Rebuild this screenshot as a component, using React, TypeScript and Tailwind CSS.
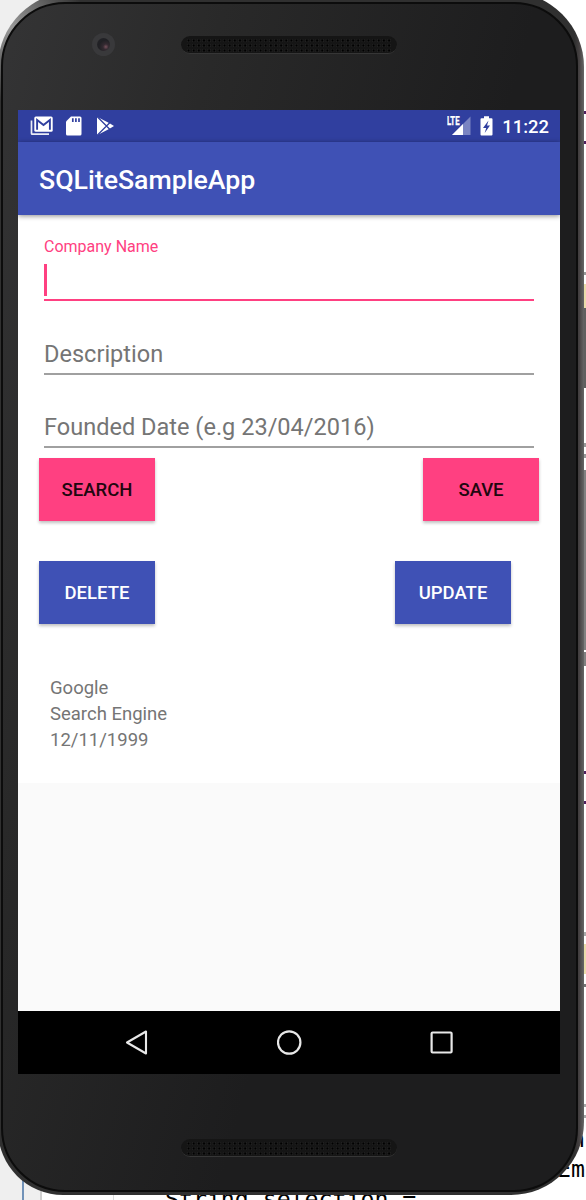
import React from "react";

function Speaker() {
  return (
    <div className="h-[18px] w-[216px] rounded-full border-b border-[#363636] bg-[#151515] px-[5px] pt-[2px]">
      <div className="h-[15px] w-full bg-[radial-gradient(circle_at_50%_50%,#000_0.8px,#242424_1.5px,transparent_2px)] bg-[length:5.15px_5px]" />
    </div>
  );
}

function StatusBar() {
  return (
    <div className="flex h-8 shrink-0 items-center bg-[#303f9f] px-3 text-white">
      <div className="flex items-center gap-3">
        <svg className="h-5 w-6" viewBox="0 0 24 20">
          <path d="M1.500 4.500v13q0 .7.700.7H19" fill="none" stroke="currentColor" strokeWidth="1.700" opacity=".9" />
          <rect x="4.300" y=".500" width="18.400" height="15.200" rx="1.500" fill="currentColor" />
          <path d="M7.100 13.700V4L13.500 9 19.900 4v9.700" fill="none" stroke="#303f9f" strokeWidth="1.900" />
        </svg>
        <svg className="-ml-px h-5 w-[17px]" viewBox="0 0 17 20">
          <path d="M6 .5h9q1.500 0 1.500 1.500v16q0 1.500-1.500 1.500H2.500Q1 19.500 1 18V5.500z" fill="currentColor" />
          <path d="M7.800 2.300v3.800M10.900 2.300v3.800M14 2.300v3.800" stroke="#303f9f" strokeWidth="1.700" />
        </svg>
        <svg className="ml-[2px] h-5 w-[19px]" viewBox="0 0 19 20">
          <path d="M1 .700 13.500 7.300 18 10l-4.500 2.700L1 19.300z" fill="currentColor" />
          <path d="M1 .500 14.500 14M1 19.500 14.500 6" stroke="#303f9f" strokeWidth="1.300" />
        </svg>
      </div>
      <div className="-mr-px ml-auto flex items-center gap-[9px]">
        <svg className="h-5 w-6" viewBox="0 0 24 20">
          <path d="M5 19 23.500 .500V19z" fill="#7a84c2" />
          <path d="M5 19 16 8v11z" fill="currentColor" />
          <path d="M0 0h13v10H0z" fill="#303f9f" />
          <text x="0" y="9" textLength="12.500" lengthAdjust="spacingAndGlyphs" fill="currentColor" stroke="currentColor" strokeWidth=".3" fontFamily="Roboto, sans-serif" fontSize="12" fontWeight="700">LTE</text>
        </svg>
        <svg className="h-5 w-[13px]" viewBox="0 0 13 20">
          <path d="M4 .300h5v2h2.500q1 0 1 1v15.200q0 1-1 1h-10q-1 0-1-1V3.300q0-1 1-1H4z" fill="currentColor" />
          <path d="M8.500 4.500 3 12h3.200l-1.500 5L10 9.500H7z" fill="#303f9f" />
        </svg>
        <span className="mt-[2px] text-[18.400px] font-medium leading-5">11:22</span>
      </div>
    </div>
  );
}

function Field({ label }: { label: string }) {
  return (
    <div className="flex h-[73.500px] items-end border-b-2 border-[#a0a0a0] pb-[5px] text-[23.550px] leading-7 text-[#757575]">
      {label}
    </div>
  );
}

function Button({ label, tone }: { label: string; tone: string }) {
  return (
    <button className={`${tone} flex h-[63px] w-[116px] items-center justify-center pt-[3px] text-[18.500px] font-medium shadow-[0_2px_3px_rgba(0,0,0,0.25)]`}>
      {label}
    </button>
  );
}

function Screen() {
  return (
    <div className="flex h-[964px] w-[542px] flex-col overflow-hidden bg-[#fafafa]">
      <StatusBar />
      <header className="z-10 flex h-[73px] shrink-0 items-center bg-[#3f51b5] pl-[21px] pt-[3px] text-[26.700px] font-medium text-white shadow-[0_1px_5px_rgba(0,0,0,0.45)]">
        SQLiteSampleApp
      </header>
      <main className="flex h-[568px] shrink-0 flex-col bg-white">
        <div className="px-[26px] pt-[22px]">
          <div className="h-16 border-b-2 border-[#ff4081] text-[16px] leading-5 text-[#ff4081]">
            Company Name
            <div className="mt-[7px] h-8 w-[3px] bg-[#ff4081]" />
          </div>
          <Field label="Description" />
          <Field label="Founded Date (e.g 23/04/2016)" />
        </div>
        <div className="mt-[10px] flex justify-between px-[21px]">
          <Button label="SEARCH" tone="bg-[#ff4081] text-[#21070f]" />
          <Button label="SAVE" tone="bg-[#ff4081] text-[#21070f]" />
        </div>
        <div className="mt-10 flex justify-between pl-[21px] pr-[49px]">
          <Button label="DELETE" tone="bg-[#3f51b5] text-white" />
          <Button label="UPDATE" tone="bg-[#3f51b5] text-white" />
        </div>
        <div className="px-8 pt-[52px] text-[18.500px] leading-[25.800px] text-[#757575]">
          <p>Google</p>
          <p>Search Engine</p>
          <p>12/11/1999</p>
        </div>
      </main>
      <nav className="mt-auto flex h-[63px] shrink-0 items-center justify-between bg-black pl-[107px] pr-[106px] text-[#e8e8e8]">
        <svg className="h-[26px] w-6" viewBox="0 0 24 26" fill="none" stroke="currentColor" strokeWidth="2.100" strokeLinejoin="round">
          <path d="M2 12.500 21 1.500v22z" />
        </svg>
        <svg className="h-[26px] w-[26px]" viewBox="0 0 26 26" fill="none" stroke="currentColor" strokeWidth="2.200">
          <circle cx="12.200" cy="12.500" r="11.200" />
        </svg>
        <svg className="h-6 w-6" viewBox="0 0 24 24" fill="none" stroke="currentColor" strokeWidth="2.200">
          <rect x="1.600" y="1.500" width="20" height="20" rx="1" />
        </svg>
      </nav>
    </div>
  );
}

function EditorBackdrop() {
  return (
    <div className="flex h-full w-full flex-col justify-between overflow-hidden">
      <div className="flex h-20">
        <div className="w-[60px] bg-[#efefef]" />
      </div>
      <div className="flex h-[76px] whitespace-pre font-['DejaVu_Sans_Mono',monospace] text-[23.200px] leading-[30px] text-black">
        <div className="w-[22px] bg-[#efefef]" />
        <div className="w-[2px] bg-[#7192b8]" />
        <div className="w-4 bg-[#efefef]" />
        <div className="w-[73px] border-l-2 border-[#d0d0d0]" />
        <div className="w-[52px] border-l border-[#dcdcdc]" />
        <div className="flex grow flex-col">
          <span className="self-end pr-px">n</span>
          <span className="self-end pr-px">Em</span>
          <span>String selection =</span>
        </div>
      </div>
    </div>
  );
}

const gutterMarks = [
  "mt-[111px] h-[3px] bg-[#50205f]",
  "mt-[27px] h-[3px] bg-[#50205f]",
  "mt-32 h-[3px] bg-[#999]",
  "mt-[9px] h-6 bg-[#eadcaa]",
  "h-20 bg-[#606060]",
  "mt-[55px] h-1 bg-[#999]",
  "mt-[7px] h-1 bg-[#999]",
  "mt-3 h-[180px] bg-[#808080]",
  "mt-[2px] h-[14px] bg-[#808080]",
  "mt-[105px] h-[3px] bg-[#50205f]",
  "mt-[27px] h-[3px] bg-[#50205f]",
  "mt-[128px] h-1 bg-[#aaa]",
  "mt-2 h-[30px] bg-[#eadcaa]",
  "mt-[10px] h-[3px] bg-[#777]",
  "mt-[117px] h-[3px] bg-[#aaa]",
  "mt-2 h-[3px] bg-[#aaa]",
];

export default function App() {
  return (
    <div className="relative h-[1200px] w-[586px] overflow-hidden bg-white font-[Roboto,sans-serif]">
      <EditorBackdrop />
      <div className="absolute right-0 top-0 flex w-[2px] flex-col">
        {gutterMarks.map((mark, i) => (
          <div key={i} className={`${mark} w-[2px] shrink-0`} />
        ))}
      </div>
      <div className="absolute left-[-2px] top-[-8px] h-[1203px] w-[586px] rounded-[75px_75px_73px_65px] bg-[radial-gradient(circle_at_12px_35px,#999_0,#777_25px,transparent_75px),linear-gradient(90deg,#303030_0,#303030_98.4%,#454142_99.2%,#666_100%)] pl-[3px] pt-[10px]">
        <div className="flex h-[1190px] w-[577px] flex-col rounded-[64px] border-2 border-[#0c0c0c] bg-[linear-gradient(105deg,#343435_0%,#292929_25%,#1d1d1e_60%,#1d1d1e_100%)]">
          <div className="flex h-[106px] w-full items-start gap-[66px] pl-[89px] pt-[29px]">
            <div className="flex size-[23px] items-center justify-center rounded-full bg-[#39393b]">
              <div className="size-[13px] rounded-full bg-[radial-gradient(circle_at_68%_68%,#76515c_0,#342a31_22%,#202024_55%,#252529_100%)]" />
            </div>
            <div className="pt-[3px]">
              <Speaker />
            </div>
          </div>
          <div className="pl-[15px]">
            <Screen />
          </div>
          <div className="pl-[178px] pt-[65px]">
            <Speaker />
          </div>
        </div>
      </div>
    </div>
  );
}
